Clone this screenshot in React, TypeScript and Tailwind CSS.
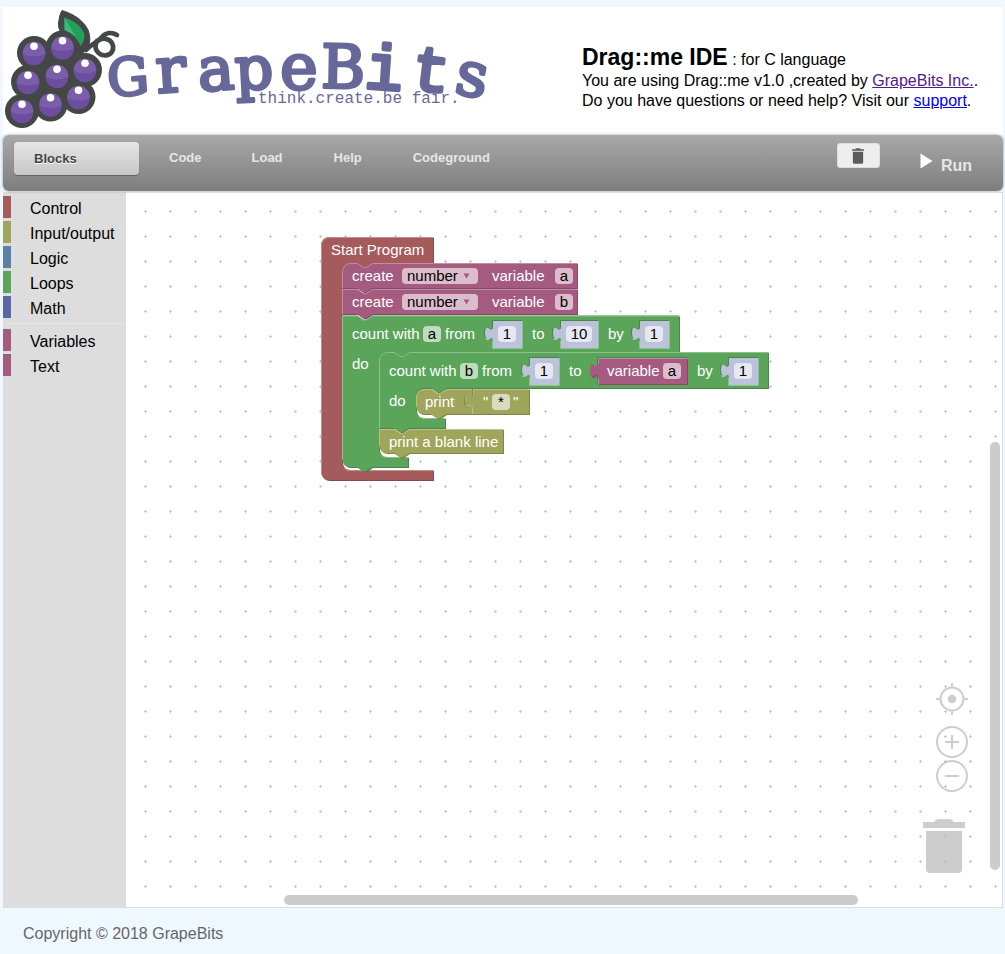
import React from "react";

const BERRIES: [number, number][] = [
  [34, 53],
  [62.5, 47.5],
  [28, 82],
  [57, 76],
  [85, 70],
  [22, 111],
  [50.5, 104.5],
  [78.5, 97],
];

const SERIF = "'DejaVu Serif', serif";
const MONO = "'Liberation Mono', monospace";

const LETTERS: { ch: string; x: number; y: number; size: number; turn: number; font: string; stroke: number }[] = [
  { ch: "G", x: 128, y: 95, size: 52, turn: -4, font: SERIF, stroke: 3 },
  { ch: "r", x: 171, y: 92, size: 64, turn: -4, font: SERIF, stroke: 3 },
  { ch: "a", x: 216, y: 90, size: 61, turn: -4, font: SERIF, stroke: 3 },
  { ch: "p", x: 254, y: 89, size: 60, turn: -3, font: SERIF, stroke: 3 },
  { ch: "e", x: 299, y: 89, size: 64, turn: 0, font: SERIF, stroke: 3 },
  { ch: "B", x: 343, y: 88, size: 60, turn: 1, font: SERIF, stroke: 3 },
  { ch: "i", x: 384, y: 89, size: 63, turn: 4, font: MONO, stroke: 4 },
  { ch: "t", x: 431, y: 91, size: 63, turn: 7, font: MONO, stroke: 4 },
  { ch: "s", x: 472, y: 96, size: 62, turn: 10, font: SERIF, stroke: 3 },
];

function Logo() {
  return (
    <svg viewBox="3 7 497 128" className="h-32 w-[497px] shrink-0" role="img" aria-label="GrapeBits">
      <g fill="none" stroke="#434746" strokeWidth="4.6" strokeLinecap="round">
        <path d="M86 50C92 43 97 43 101 38C106 32 112 32 117 35" />
        <path d="M97 41C93 49 98 55 105 55.500C112 55 115 49 112 43C109 38 103 38 99 40" />
      </g>
      {BERRIES.map(([x, y], i) => (
        <circle key={i} cx={x} cy={y} r="17" fill="#434746" />
      ))}
      <path d="M34 53L62 47L85 70L78 97L50 105L22 111Z" fill="#434746" />
      <path
        d="M62 10.500C74 14 84 21 88 30C91 38 90 44 87 49L80 56L68 40C60 34 57 27 59 20Q60 13 62 10.500Z"
        fill="#434746"
        stroke="#434746"
        strokeWidth="1"
        strokeLinejoin="round"
      />
      <path d="M64.500 17.500C75 21 84 28 84.500 36Q84 42 80.500 46C77 37 71 33 64.500 30Z" fill="#239f5a" />
      <path d="M64.500 17.500L76 37C72 33 68 31.500 64.500 30Z" fill="#3db97c" />
      {BERRIES.map(([x, y], i) => (
        <g key={i}>
          <circle cx={x} cy={y} r="11.300" fill="#7b5daa" />
          <path d={`M${x - 11.3} ${y + 1}Q${x} ${y + 6} ${x + 11.3} ${y + 1}A11.300 11.300 0 0 1 ${x - 11.3} ${y + 1}Z`} fill="#6d4d9f" />
          <circle cx={x} cy={y - 6.7} r="3.800" fill="#fff" />
        </g>
      ))}
      <g fill="#67689a" stroke="#67689a" strokeLinejoin="round" textAnchor="middle">
        {LETTERS.map((l) => (
          <text
            key={l.ch}
            x={l.x}
            y={l.y}
            fontSize={l.size}
            fontFamily={l.font}
            strokeWidth={l.stroke}
            transform={`rotate(${l.turn} ${l.x} ${l.y - 18})`}
          >
            {l.ch}
          </text>
        ))}
      </g>
      <text x="258" y="103" fontSize="16" fill="#67689a" fontFamily={MONO}>
        think.create.be fair.
      </text>
    </svg>
  );
}

const notchR = "l6 4h3l6 -4";
const notchL = "l-6 4h-3l-6 -4";

function Shape({ d, light, fill, dark, hi }: { d: string; light: string; fill: string; dark: string; hi: string }) {
  return (
    <g>
      <path d={d} fill={dark} transform="translate(1 1)" />
      <path d={d} fill={fill} />
      <path d={light} fill="none" stroke={hi} strokeWidth="1" transform="translate(.5 .5)" />
    </g>
  );
}

const RED = { fill: "#a55b5b", dark: "#844949", hi: "#c08c8c" };
const PINK = { fill: "#a55b80", dark: "#844966", hi: "#c08ca6" };
const GREEN = { fill: "#5ba55b", dark: "#498449", hi: "#8cc08c" };
const OLIVE = { fill: "#9fa55b", dark: "#7f8449", hi: "#bcc08c" };
const LILAC = { fill: "#bdc2db" };

function valuePath(x: number, y: number, w: number, h: number) {
  return `M${x} ${y}h${w}v${h}h${-w}V${y + 20}c0 -10 -8 8 -8 -7.500s8 2.500 8 -7.500Z`;
}

function Socket({ x, y, w }: { x: number; y: number; w: number }) {
  return (
    <g>
      <path d={valuePath(x, y, w, 27)} fill={LILAC.fill} />
      <path d={`M${x + w} ${y - 0.5}H${x - 0.5}v5.500c0 10 -8 -8 -8 7.500q0 4 2 5`} fill="none" stroke={GREEN.dark} />
      <path d={`M${x - 0.5} ${y + 20}v7.500h${w + 1}V${y}`} fill="none" stroke={GREEN.hi} />
    </g>
  );
}

function BlockShapes() {
  return (
    <svg viewBox="321 237 450 246" className="absolute top-0 left-0 h-[246px] w-[450px]" aria-hidden="true">
      <Shape
        {...RED}
        d={`M321 245a8 8 0 0 1 8 -8H433V263H372${notchL}H350a8 8 0 0 0 -8 8V462a8 8 0 0 0 8 8H433V480H329a8 8 0 0 1 -8 -8Z`}
        light="M321 473V245a8 8 0 0 1 8 -8H433M344 468a8 8 0 0 0 6 2H433"
      />
      <Shape
        {...PINK}
        d={`M342 271a8 8 0 0 1 8 -8H357${notchR}H577V288H372${notchL}H342Z`}
        light={`M342 288V271a8 8 0 0 1 8 -8H357${notchR}H577`}
      />
      <Shape {...PINK} d={`M342 289H357${notchR}H577V314H372${notchL}H342Z`} light={`M342 314V289H357${notchR}H577`} />
      <Shape
        {...GREEN}
        d={`M342 315.500H357${notchR}H679V352H409${notchL}H387a8 8 0 0 0 -8 8V449a8 8 0 0 0 8 8H408V467H372${notchL}H350a8 8 0 0 1 -8 -8Z`}
        light={`M342 459V315.500H357${notchR}H679M381 455a8 8 0 0 0 6 2H408`}
      />
      <Shape
        {...GREEN}
        d={`M379 360a8 8 0 0 1 8 -8H394${notchR}H768V388H446${notchL}H424a8 8 0 0 0 -8 8V410a8 8 0 0 0 8 8H445V428H409${notchL}H379Z`}
        light={`M379 428V360a8 8 0 0 1 8 -8H394${notchR}H768M418 416a8 8 0 0 0 6 2H445`}
      />
      <Shape
        {...OLIVE}
        d={`M416 397a8 8 0 0 1 8 -8H431${notchR}H529V414H446${notchL}H424a8 8 0 0 1 -8 -8Z`}
        light={`M416 406V397a8 8 0 0 1 8 -8H431${notchR}H529`}
      />
      <path d="M472.500 389v5c0 10 -8 -8 -8 7.500q0 5 3 5" fill="none" stroke={OLIVE.dark} />
      <path d="M466 406q6 -3 6.500 3v5" fill="none" stroke={OLIVE.hi} />
      <path d="M473.500 389v5c0 10 -8 -8 -8 7.500" fill="none" stroke={OLIVE.hi} strokeWidth=".7" />
      <Shape
        {...OLIVE}
        d={`M379 429H394${notchR}H503V453H409${notchL}H387a8 8 0 0 1 -8 -8Z`}
        light={`M379 445V429H394${notchR}H503`}
      />
      <Socket x={493} y={321} w={29} />
      <Socket x={561} y={321} w={37} />
      <Socket x={640} y={321} w={29} />
      <Socket x={530} y={358} w={29} />
      <path d="M597.500 384.500V357.500H687.500" fill="none" stroke={GREEN.dark} />
      <Socket x={729} y={358} w={29} />
      <Shape {...PINK} d={valuePath(598, 358, 89, 26)} light="M598 384V378M598 363V358H687" />
    </svg>
  );
}

function Field({ value, label, wide }: { value: string; label: string; wide?: boolean }) {
  return (
    <input
      aria-label={label}
      defaultValue={value}
      className={`h-4 shrink-0 rounded bg-white/60 p-0 text-center text-[15px] leading-4 text-black outline-none ${
        wide ? "w-[26px]" : "w-[18px]"
      }`}
    />
  );
}

function CreateRow({ name }: { name: string }) {
  return (
    <div className="flex h-[26px] items-center pl-[10px]">
      <span className="w-[50px]">create</span>
      <span className="relative flex">
        <select
          aria-label={`Type of variable ${name}`}
          className="h-4 w-[76px] appearance-none rounded bg-white/60 pl-[5px] text-[15px] leading-4 text-black outline-none"
        >
          <option>number</option>
        </select>
        <svg viewBox="0 0 7 6" className="pointer-events-none absolute top-[5px] right-[8px] h-[6px] w-[7px]" aria-hidden="true">
          <path d="M0.500 0.500H6.500L3.500 5.500Z" fill="#a55b80" />
        </svg>
      </span>
      <span className="ml-[14px] w-[63px]">variable</span>
      <Field value={name} label="Variable name" />
    </div>
  );
}

function CountRow({ name, to }: { name: string; to: React.ReactNode }) {
  return (
    <div className="flex h-[37px] items-center pl-[10px]">
      <span className="mr-[5px] w-[66px]">count with</span>
      <Field value={name} label="Loop variable" />
      <span className="ml-1 w-[53px]">from</span>
      <Field value="1" label="From" />
      {to}
      <span className="ml-4 w-[37px]">by</span>
      <Field value="1" label="Step" />
    </div>
  );
}

function Program() {
  return (
    <div className="absolute top-[44px] left-[195px] w-[450px] text-[15px] leading-4 whitespace-nowrap text-white">
      <BlockShapes />
      <div className="relative">
        <div className="flex h-[26px] items-center pl-[10px]">Start Program</div>
        <div className="pl-[21px]">
          <CreateRow name="a" />
          <CreateRow name="b" />
          <CountRow
            name="a"
            to={
              <>
                <span className="ml-4 w-[34px]">to</span>
                <Field value="10" label="To" wide />
              </>
            }
          />
          <div className="flex">
            <span className="w-[37px] pt-1 pl-[10px]">do</span>
            <div>
              <CountRow
                name="b"
                to={
                  <>
                    <span className="ml-4 w-[38px]">to</span>
                    <span className="w-[56px]">variable</span>
                    <Field value="a" label="Variable" />
                  </>
                }
              />
              <div className="flex h-10">
                <span className="w-[37px] pt-1 pl-[10px]">do</span>
                <div className="flex h-[26px] items-center pl-[9px]">
                  <span className="w-[58px]">print</span>
                  <span className="w-[9px]">"</span>
                  <Field value="*" label="Text" />
                  <span className="ml-[3px]">"</span>
                </div>
              </div>
              <div className="flex h-[26px] items-center pl-[10px]">print a blank line</div>
            </div>
          </div>
        </div>
      </div>
    </div>
  );
}

const CATEGORIES = [
  { name: "Control", bar: "bg-[#a55b5b]" },
  { name: "Input/output", bar: "bg-[#9fa55b]" },
  { name: "Logic", bar: "bg-[#5b80a5]" },
  { name: "Loops", bar: "bg-[#5ba55b]" },
  { name: "Math", bar: "bg-[#5b67a5]" },
];
const MORE = [
  { name: "Variables", bar: "bg-[#a55b80]" },
  { name: "Text", bar: "bg-[#a55b80]" },
];

function Category({ name, bar }: { name: string; bar: string }) {
  return (
    <button className="mb-[3px] flex h-[22px] w-full items-center gap-[19px] text-left">
      <span className={`h-full w-2 ${bar}`} />
      <span className="pt-[3px] leading-5">{name}</span>
    </button>
  );
}

function Trash({ className }: { className: string }) {
  return (
    <svg viewBox="0 0 42 54" className={className} fill="currentColor" aria-hidden="true">
      <path d="M0 3H11Q13 0 16 0H26Q29 0 31 3H42V9H0Z" />
      <path d="M3 12H39V50Q39 54 35 54H7Q3 54 3 50Z" />
    </svg>
  );
}

function CanvasControls() {
  return (
    <div className="absolute right-[34px] bottom-[34px] flex flex-col items-end text-[#b8b8b8]/70">
      <button aria-label="Center" className="mb-[11px]">
        <svg viewBox="0 0 32 32" className="size-8" fill="none" stroke="currentColor" strokeWidth="2">
          <circle cx="16" cy="16" r="11.500" />
          <circle cx="16" cy="16" r="4.300" fill="currentColor" stroke="none" />
          <path d="M16 0V3.500M16 28.500V32M0 16H3.500M28.500 16H32" />
        </svg>
      </button>
      <button aria-label="Zoom in" className="mb-[2px]">
        <svg viewBox="0 0 32 32" className="size-8" fill="none" stroke="currentColor" strokeWidth="2">
          <circle cx="16" cy="16" r="15" />
          <path d="M9 16H23M16 9V15M16 17V23" />
        </svg>
      </button>
      <button aria-label="Zoom out" className="mb-[27px]">
        <svg viewBox="0 0 32 32" className="size-8" fill="none" stroke="currentColor" strokeWidth="2">
          <circle cx="16" cy="16" r="15" />
          <path d="M9 16H23" />
        </svg>
      </button>
      <Trash className="mr-[3px] h-[54px] w-[42px]" />
    </div>
  );
}

export default function App() {
  return (
    <div className="flex min-h-screen flex-col bg-[#f0f8ff] pt-[7px] pr-[2px] pl-[3px] font-['Liberation_Sans',Arial,sans-serif] text-base text-black">
      <header className="flex h-32 bg-white">
        <Logo />
        <div className="ml-[82px] pt-[39px] leading-5 whitespace-nowrap">
          <p className="h-[25px] leading-[22px]">
            <strong className="text-[23px]">Drag::me IDE</strong> : for C language
          </p>
          <p>
            You are using Drag::me v1.0 ,created by{" "}
            <a href="#grapebits" className="text-[#551a8b] underline">
              GrapeBits Inc.
            </a>
            .
          </p>
          <p>
            Do you have questions or need help? Visit our{" "}
            <a href="#support" className="text-[#0000ee] underline">
              support
            </a>
            .
          </p>
        </div>
      </header>

      <nav className="relative flex h-14 items-start rounded-md bg-linear-to-b from-[#a9a9a9] to-[#7e7e7e] pt-[7px] pr-[31px] pl-[11px] text-[13px] font-bold text-[#e7e5e5] shadow-[0_0_3px_rgba(0,0,0,0.4)] [text-shadow:0_1px_1px_rgba(0,0,0,0.3)]">
        <button className="mr-[5px] h-[33px] w-[125px] rounded bg-linear-to-b from-[#e6e6e6] to-[#c6c6c6] pl-5 text-left text-[#444] shadow-[0_1px_1px_rgba(0,0,0,0.3)] [text-shadow:0_1px_0_#fff]">
          Blocks
        </button>
        <button className="h-[31px] px-[25px]">Code</button>
        <button className="h-[31px] px-[25px]">Load</button>
        <button className="h-[31px] px-[26px]">Help</button>
        <button className="h-[31px] px-[25px]">Codeground</button>
        <button
          aria-label="Discard blocks"
          className="mt-px ml-auto flex h-[25px] w-[43px] items-center justify-center rounded-[3px] border border-[#ddd] bg-[#eee] text-[#5b5b5b]"
        >
          <Trash className="h-4 w-3" />
        </button>
        <button className="ml-10 flex h-8 gap-2 text-base">
          <svg viewBox="0 0 13 16" className="mt-[11px] h-4 w-[13px]" aria-hidden="true">
            <path d="M0.500 0.500V15.500L12.500 8Z" fill="#fff" />
          </svg>
          <span className="pt-3">Run</span>
        </button>
      </nav>

      <main className="flex flex-1 pt-px">
        <aside className="w-[123px] shrink-0 bg-[#ddd] pt-1">
          {CATEGORIES.map((c) => (
            <Category key={c.name} {...c} />
          ))}
          <hr className="mt-[5px] mb-[5px] ml-[5px] border-t border-[#e5e5e5]" />
          {MORE.map((c) => (
            <Category key={c.name} {...c} />
          ))}
        </aside>
        <section className="relative flex-1 border border-l-0 border-[#ddd] bg-white" aria-label="Workspace">
          <svg className="absolute inset-0 h-full w-full" aria-hidden="true">
            <defs>
              <pattern id="grid" x="17" y="16" width="25" height="25" patternUnits="userSpaceOnUse">
                <path d="M1 2.500H4M2.500 1V4" stroke="#c8c8c8" />
              </pattern>
            </defs>
            <rect width="100%" height="100%" fill="url(#grid)" />
          </svg>
          <Program />
          <CanvasControls />
          <div className="absolute top-[249px] right-[2px] bottom-[37px] w-[10px] rounded-full bg-[#ccc]" />
          <div className="absolute right-[144px] bottom-[2px] left-[158px] h-[10px] rounded-full bg-[#ccc]" />
        </section>
      </main>

      <footer className="flex h-[46px] items-center pt-[6px] pl-5 text-[#666]">Copyright © 2018 GrapeBits</footer>
    </div>
  );
}
